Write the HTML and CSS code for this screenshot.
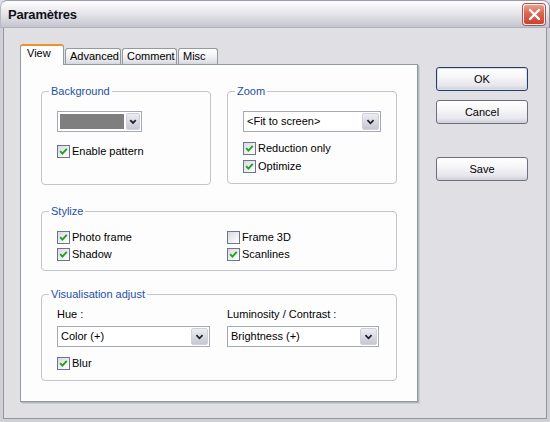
FILE: index.html
```html
<!DOCTYPE html>
<html>
<head>
<meta charset="utf-8">
<link rel="stylesheet" href="styles.css">
</head>
<body>
<div class="window">
  <div class="titlebar">
    <span class="title">Paramètres</span>
    <span class="close"><svg width="19" height="17" viewBox="0 0 19 17"><path d="M5 4 L14 13 M14 4 L5 13" stroke="#fff" stroke-width="2.4" stroke-linecap="round" fill="none"/></svg></span>
  </div>
  <div class="client">
    <div class="tabarea">
      <div class="tabs">
        <div class="tab active t-view">View</div>
        <div class="tab t-adv">Advanced</div>
        <div class="tab t-com">Comment</div>
        <div class="tab t-misc">Misc</div>
      </div>
      <div class="panel">
        <div class="row-top">
          <fieldset class="group g-bg">
            <legend>Background</legend>
            <div class="combo color">
              <span class="swatch"></span>
              <span class="drop small"><svg width="13" height="15" viewBox="0 0 13 15"><polyline points="3.5,6 6.5,9 9.5,6" stroke="#1e2230" stroke-width="2" fill="none"/></svg></span>
            </div>
            <label class="check c-enable"><span class="box on"><svg width="11" height="11" viewBox="0 0 11 11"><polyline points="2.2,5.2 4.4,7.6 8.8,2.8" stroke="#21a121" stroke-width="1.9" fill="none"/></svg></span>Enable pattern</label>
          </fieldset>
          <fieldset class="group g-zoom">
            <legend>Zoom</legend>
            <div class="combo wide">
              <span class="value">&lt;Fit to screen&gt;</span>
              <span class="drop"><svg width="17" height="17" viewBox="0 0 17 17"><polyline points="5,7 8.5,10.5 12,7" stroke="#1e2230" stroke-width="2" fill="none"/></svg></span>
            </div>
            <label class="check c-red"><span class="box on"><svg width="11" height="11" viewBox="0 0 11 11"><polyline points="2.2,5.2 4.4,7.6 8.8,2.8" stroke="#21a121" stroke-width="1.9" fill="none"/></svg></span>Reduction only</label>
            <label class="check c-opt"><span class="box on"><svg width="11" height="11" viewBox="0 0 11 11"><polyline points="2.2,5.2 4.4,7.6 8.8,2.8" stroke="#21a121" stroke-width="1.9" fill="none"/></svg></span>Optimize</label>
          </fieldset>
        </div>
        <fieldset class="group g-style">
          <legend>Stylize</legend>
          <div class="style-grid">
            <label class="check"><span class="box on"><svg width="11" height="11" viewBox="0 0 11 11"><polyline points="2.2,5.2 4.4,7.6 8.8,2.8" stroke="#21a121" stroke-width="1.9" fill="none"/></svg></span>Photo frame</label>
            <label class="check"><span class="box"></span>Frame 3D</label>
            <label class="check"><span class="box on"><svg width="11" height="11" viewBox="0 0 11 11"><polyline points="2.2,5.2 4.4,7.6 8.8,2.8" stroke="#21a121" stroke-width="1.9" fill="none"/></svg></span>Shadow</label>
            <label class="check"><span class="box on"><svg width="11" height="11" viewBox="0 0 11 11"><polyline points="2.2,5.2 4.4,7.6 8.8,2.8" stroke="#21a121" stroke-width="1.9" fill="none"/></svg></span>Scanlines</label>
          </div>
        </fieldset>
        <fieldset class="group g-vis">
          <legend>Visualisation adjust</legend>
          <div class="vis-grid">
            <span class="lbl">Hue :</span>
            <span class="lbl">Luminosity / Contrast :</span>
            <div class="combo">
              <span class="value">Color (+)</span>
              <span class="drop"><svg width="17" height="17" viewBox="0 0 17 17"><polyline points="5,7 8.5,10.5 12,7" stroke="#1e2230" stroke-width="2" fill="none"/></svg></span>
            </div>
            <div class="combo">
              <span class="value">Brightness (+)</span>
              <span class="drop"><svg width="17" height="17" viewBox="0 0 17 17"><polyline points="5,7 8.5,10.5 12,7" stroke="#1e2230" stroke-width="2" fill="none"/></svg></span>
            </div>
            <label class="check c-blur"><span class="box on"><svg width="11" height="11" viewBox="0 0 11 11"><polyline points="2.2,5.2 4.4,7.6 8.8,2.8" stroke="#21a121" stroke-width="1.9" fill="none"/></svg></span>Blur</label>
          </div>
        </fieldset>
      </div>
    </div>
    <div class="buttons">
      <button class="btn default">OK</button>
      <button class="btn">Cancel</button>
      <button class="btn save">Save</button>
    </div>
  </div>
</div>
</body>
</html>
```

FILE: styles.css
```css
* { box-sizing: border-box; }

html, body {
  margin: 0;
  padding: 0;
  background: #e0dfe3;
}

body {
  font-family: "Liberation Sans", Arial, sans-serif;
  font-size: 11px;
  line-height: 13px;
  color: #000;
}

.window {
  width: 550px;
  height: 422px;
  display: flex;
  flex-direction: column;
  background: #e0dfe3;
}

.titlebar {
  height: 28px;
  display: flex;
  align-items: center;
  padding: 1px 4px 0 7px;
  border-top: 1px solid #9a9cb0;
  border-left: 1px solid #b8b8c4;
  border-right: 1px solid #8c8ca0;
  border-bottom: 1px solid #b0b0bc;
  border-radius: 7px 7px 0 0;
  background: linear-gradient(#ffffff 0%, #f2f2f5 25%, #dedee4 60%, #cbcbd4 90%, #c4c4cc 100%);
}

.title {
  font-size: 13px;
  font-weight: bold;
  color: #101018;
  letter-spacing: -0.2px;
}

.close {
  margin-left: auto;
  width: 22px;
  height: 21px;
  border-radius: 3px;
  border: 1px solid #f4f4f4;
  box-shadow: 0 0 0 1px #b05050;
  background: linear-gradient(#eba08e 0%, #db6650 45%, #c9432f 100%);
  display: flex;
  align-items: center;
  justify-content: center;
}

.client {
  flex: 1;
  display: flex;
  align-items: flex-start;
  padding: 16px 0 0 17px;
  border: 3px solid #cfcfd6;
  border-top: 0;
  box-shadow: inset 1px 0 0 #9494a0, inset -1px -1px 0 #9494a0;
}

.tabarea {
  width: 398px;
  display: flex;
  flex-direction: column;
}

.tabs {
  height: 20px;
  display: flex;
  align-items: flex-end;
}

.tab {
  height: 16px;
  padding: 1px 0 0 4px;
  margin-right: 1px;
  border: 1px solid #919b9c;
  border-bottom: 0;
  border-radius: 3px 3px 0 0;
  background: linear-gradient(#ffffff 0%, #f4f4f6 45%, #e4e4ea 80%, #d6d6de 100%);
  white-space: nowrap;
}

.tab.active {
  height: 21px;
  margin-bottom: -1px;
  padding: 1px 0 0 6px;
  border-top: 2px solid #e8952e;
  background: #fdfdfe;
  position: relative;
  z-index: 1;
}

.t-view { width: 44px; }
.t-adv { width: 56px; }
.t-com { width: 55px; }
.t-misc { width: 40px; }

.panel {
  height: 338px;
  border: 1px solid #919b9c;
  background: #fdfdfe;
  box-shadow: 1px 1px 0 #b4b4bc, 2px 2px 0 #cdcdd4;
  padding: 20px 0 0 20px;
}

.row-top {
  display: grid;
  grid-template-columns: 170px 170px;
  column-gap: 16px;
  align-items: start;
}

.group {
  margin: 0;
  min-width: 0;
  border: 1px solid #c4c4cc;
  border-radius: 4px;
  padding: 13px 15px 0 15px;
}

.group legend {
  padding: 0 2px;
  margin-left: -8px;
  color: #1f4fa3;
  line-height: 13px;
}

.g-bg { padding-bottom: 26px; }
.g-zoom { padding-bottom: 10px; }

.g-style {
  width: 356px;
  margin-top: 20px;
  padding-bottom: 9px;
}

.g-vis {
  width: 356px;
  margin-top: 17px;
  padding-top: 7px;
  padding-bottom: 10px;
}

.check {
  display: flex;
  align-items: center;
  gap: 2px;
  height: 13px;
  white-space: nowrap;
}

.box {
  width: 13px;
  height: 13px;
  flex: none;
  border: 1px solid #6b7590;
  background: linear-gradient(135deg, #d8d8de 0%, #f0f0f4 60%, #ffffff 100%);
  display: flex;
  align-items: center;
  justify-content: center;
}

.c-enable { margin-top: 13px; }
.c-red { margin-top: 10px; }
.c-opt { margin-top: 5px; }

.style-grid {
  display: grid;
  grid-template-columns: 170px auto;
  row-gap: 4px;
}

.vis-grid {
  display: grid;
  grid-template-columns: 153px 152px;
  column-gap: 17px;
}

.lbl { height: 13px; }

.vis-grid .combo { margin-top: 5px; }

.c-blur { margin-top: 10px; }

.combo {
  height: 21px;
  display: flex;
  align-items: center;
  border: 1px solid #a5a9b4;
  background: #ffffff;
  padding: 0 1px 0 3px;
}

.combo .value {
  flex: 1;
  white-space: nowrap;
  overflow: hidden;
}

.combo.wide { width: 138px; }

.combo.color {
  width: 85px;
  padding: 1px 1px 1px 2px;
  gap: 2px;
}

.swatch {
  flex: 1;
  height: 15px;
  background: #7f7f7f;
}

.drop {
  width: 17px;
  height: 17px;
  flex: none;
  border-radius: 2px;
  border: 1px solid #cfd0da;
  background: linear-gradient(#ececf2 0%, #dadae2 50%, #c6c7d2 100%);
  display: flex;
  align-items: center;
  justify-content: center;
}

.drop.small {
  width: 14px;
  height: 17px;
}

.buttons {
  width: 92px;
  margin-left: 18px;
  margin-top: 23px;
  display: flex;
  flex-direction: column;
}

.btn {
  height: 24px;
  width: 92px;
  margin: 0 0 9px 0;
  padding: 0;
  font-family: "Liberation Sans", Arial, sans-serif;
  font-size: 11px;
  color: #000;
  border: 1px solid #6e6e80;
  border-radius: 3px;
  background: linear-gradient(#ffffff 0%, #f6f6f8 40%, #e6e6ec 80%, #cfcfd8 100%);
}

.btn.default {
  border-color: #2c3a68;
  box-shadow: inset 0 0 0 1px #d6deef;
}

.btn.save { margin-top: 24px; }
```
